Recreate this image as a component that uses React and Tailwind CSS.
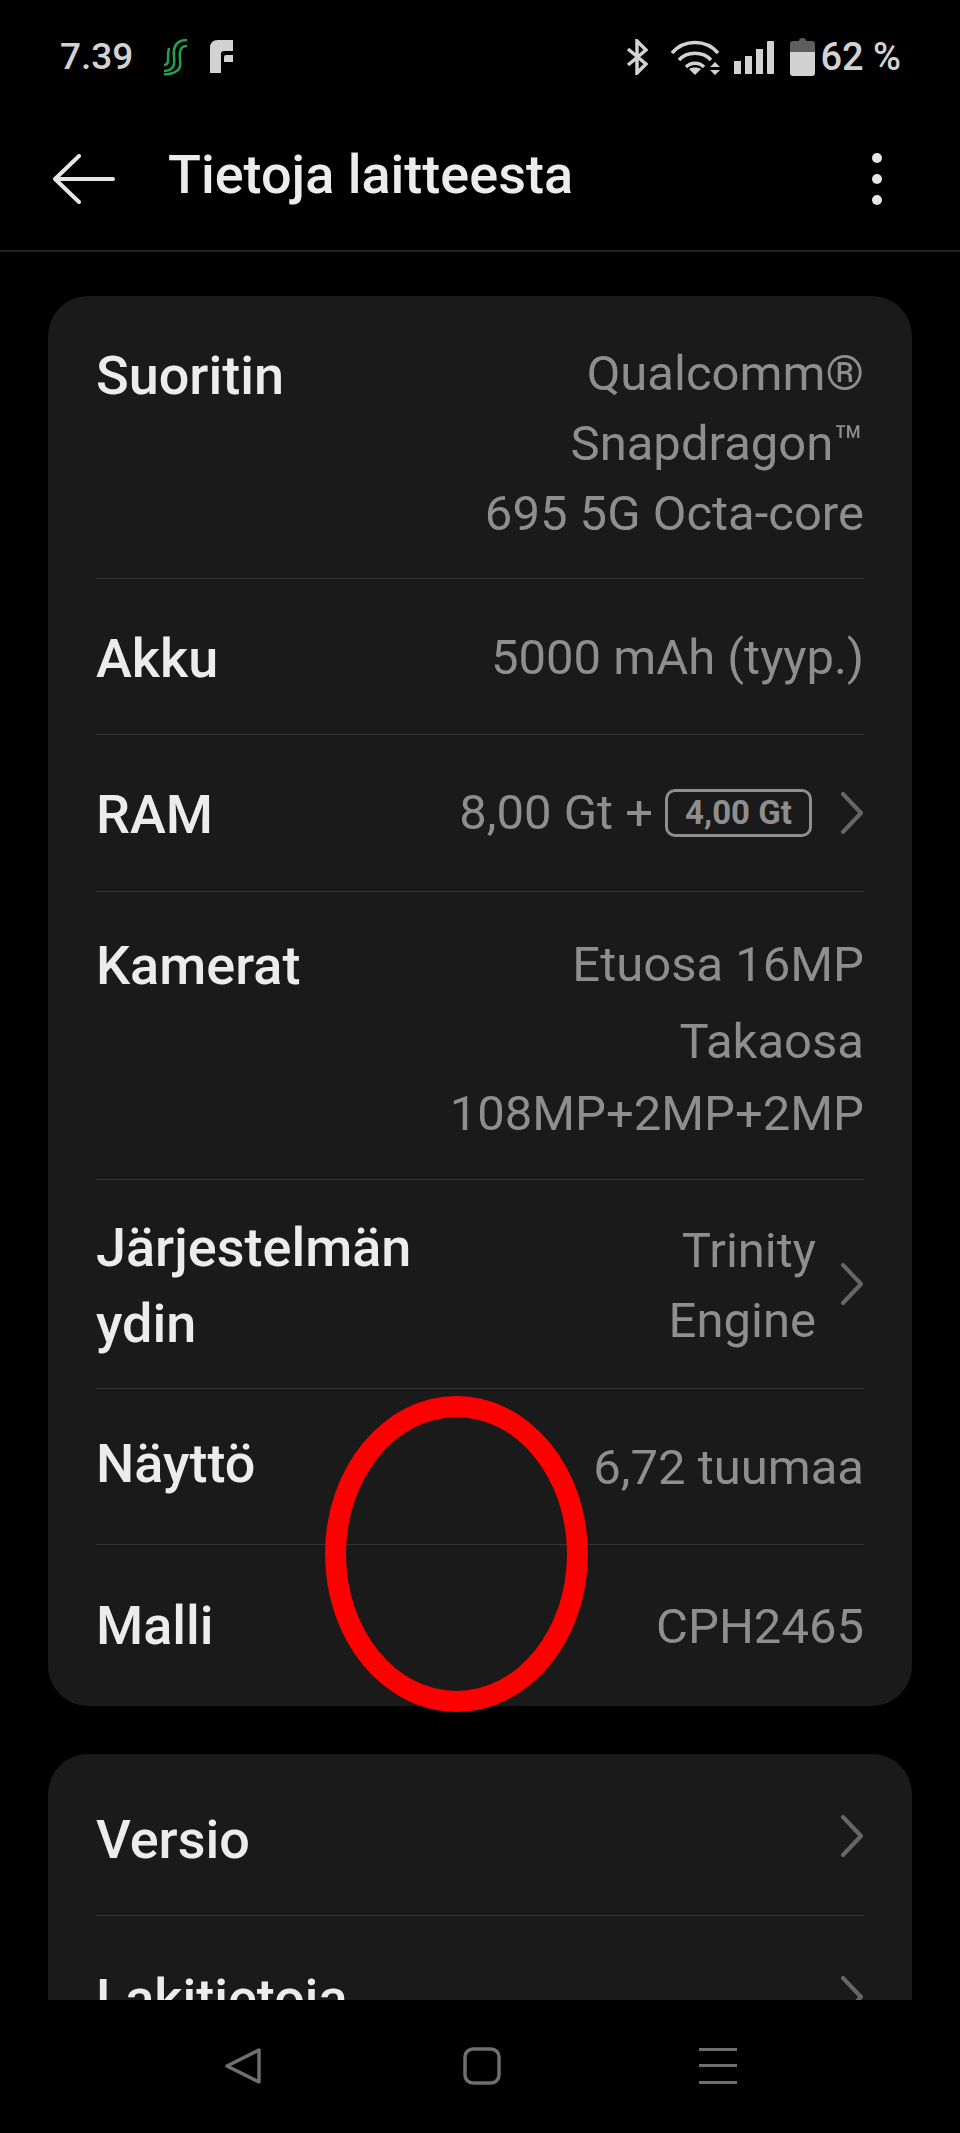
import React from 'react';

const font = { fontFamily: 'Roboto, sans-serif' };

const Chevron = ({ className = '' }) => (
    <svg className={`w-[24px] h-[42px] shrink-0 ${className}`} viewBox="0 0 24 42" fill="none" stroke="#666666" strokeWidth="4" strokeLinecap="round" strokeLinejoin="round">
        <path d="M3 2 L21 21 L3 40" />
    </svg>
);

const Label = ({ children }) => (
    <div className="pt-[4px] text-[#ececec] text-[54px] leading-[76px] font-medium">{children}</div>
);

const Value = ({ lines }) => (
    <div className="pt-[3px] text-[#8e8e8e] text-[49px] leading-[70px] text-right">
        {lines.map((line) => <div key={line}>{line}</div>)}
    </div>
);

const StatusBar = () => (
    <div className="h-[110px] flex items-center justify-between pl-[60px] pr-[59px] pt-[4px] text-[#d2d2d2] text-[38px]">
        <div className="flex items-center">
            <span className="text-[37px] font-medium">7.39</span>
            <svg className="ml-[29px] w-[26px] h-[38px]" viewBox="0 0 26 38" fill="none" stroke="#23a04f" strokeWidth="2.5">
                <path d="M25 2 C16 2 13 6 12 12 C11 18 13 20 12 26 C11 31 6 33 2 33" />
                <path d="M25 8 C20 8 19 10 18 14 C17 20 19 22 18 28 C17 34 8 37 2 36" />
                <path d="M2 27 C5 27 6 25 6 22 C6 17 6 14 7 10" />
            </svg>
            <svg className="ml-[22px] w-[24px] h-[34px]" viewBox="0 0 24 34" fill="#d2d2d2">
                <path d="M0 8 Q0 0 8 0 H23 V11 H14 Q11 11 11 14 V33 H0 Z" />
                <path d="M14 22 V17 Q14 15 16 15 H23 V22 Z" />
            </svg>
        </div>
        <div className="flex items-center">
            <svg className="w-[22px] h-[36px]" viewBox="0 0 22 36" fill="none" stroke="#d2d2d2" strokeWidth="3.5">
                <path d="M2 10 L20 25 L11 34 V2 L20 11 L2 26" />
            </svg>
            <svg className="ml-[22px] w-[52px] h-[36px]" viewBox="0 0 52 36" fill="none" stroke="#d2d2d2" strokeWidth="3.5">
                <path d="M2 14 C14 0 36 0 48 14" />
                <path d="M9 21 C17 12 33 12 41 21" />
                <path d="M16 28 C21 23 29 23 34 28" />
                <path d="M25 36 L19 30 C22 28 28 28 31 30 Z" fill="#d2d2d2" stroke="none" />
                <path d="M45 23 L50 28 H40 Z M40 31 H50 L45 36 Z" fill="#d2d2d2" stroke="none" />
            </svg>
            <svg className="ml-[12px] w-[41px] h-[33px]" viewBox="0 0 41 33" fill="#d2d2d2">
                <rect x="0" y="20" width="7" height="13" />
                <rect x="11" y="15" width="7" height="18" />
                <rect x="22" y="8" width="7" height="25" />
                <rect x="33" y="0" width="7" height="33" rx="1" />
            </svg>
            <svg className="ml-[15px] w-[25px] h-[38px]" viewBox="0 0 25 38" fill="#d2d2d2">
                <path d="M0 14 V6 Q0 3 3 3 H9 Q9 0 12.5 0 Q16 0 16 3 H22 Q25 3 25 6 V14 Z" fill="#5e5e5e" />
                <path d="M0 14 H25 V35 Q25 38 22 38 H3 Q0 38 0 35 Z" />
            </svg>
            <span className="ml-[5px] font-medium">62 %</span>
        </div>
    </div>
);

const Header = () => (
    <div className="h-[142px] flex items-center pl-[53px] pr-[78px] border-b-2 border-[#222222] text-[#ececec]">
        <svg className="w-[62px] h-[50px] shrink-0 -mt-[2px]" viewBox="0 0 62 50" fill="none" stroke="#e6e6e6" strokeWidth="4" strokeLinecap="round" strokeLinejoin="round">
            <path d="M60 25 H2 M26 2 L2 25 L26 48" />
        </svg>
        <div className="ml-[53px] -mt-[10px] flex-1 text-[54px] font-medium leading-none">Tietoja laitteesta</div>
        <div className="flex flex-col gap-[11px] -mt-[2px]">
            <div className="w-[10px] h-[10px] rounded-full bg-[#e6e6e6]" />
            <div className="w-[10px] h-[10px] rounded-full bg-[#e6e6e6]" />
            <div className="w-[10px] h-[10px] rounded-full bg-[#e6e6e6]" />
        </div>
    </div>
);

export default function App() {
    return (
        <div className="relative w-[960px] h-[2133px] bg-black overflow-hidden" style={font}>
            <StatusBar />
            <Header />

            <div className="h-[1748px] overflow-hidden px-[48px] pt-[44px]">
                <div className="bg-[#1a1a1a] rounded-[40px] px-[48px] h-[1410px] flex flex-col">
                    <div className="h-[283px] flex justify-between items-start pt-[40px] border-b border-[#333333]">
                        <div className="-mt-[2px]"><Label>Suoritin</Label></div>
                        <Value lines={['Qualcomm®', 'Snapdragon™', '695 5G Octa-core']} />
                    </div>
                    <div className="h-[156px] flex justify-between items-center border-b border-[#333333]">
                        <Label>Akku</Label>
                        <Value lines={['5000 mAh (tyyp.)']} />
                    </div>
                    <div className="h-[157px] flex justify-between items-center border-b border-[#333333]">
                        <Label>RAM</Label>
                        <div className="flex items-center text-[#8e8e8e] text-[49px]">
                            <span>8,00 Gt +</span>
                            <span className="ml-[12px] w-[147px] h-[48px] flex items-center justify-center rounded-[10px] border-[3px] border-[#8e8e8e] text-[33px] font-bold">4,00 Gt</span>
                            <Chevron className="ml-[28px]" />
                        </div>
                    </div>
                    <div className="h-[288px] flex justify-between items-start pt-[37px] border-b border-[#333333]">
                        <div className="-mt-[5px]"><Label>Kamerat</Label></div>
                        <div className="text-[#8e8e8e] text-[49px] leading-[72px] text-right">
                            <div className="mb-[5px]">Etuosa 16MP</div>
                            <div>Takaosa</div>
                            <div>108MP+2MP+2MP</div>
                        </div>
                    </div>
                    <div className="h-[209px] flex justify-between items-center border-b border-[#333333]">
                        <Label>Järjestelmän<br />ydin</Label>
                        <div className="flex items-center">
                            <Value lines={['Trinity', 'Engine']} />
                            <Chevron className="ml-[24px]" />
                        </div>
                    </div>
                    <div className="h-[156px] flex justify-between items-center border-b border-[#333333]">
                        <div className="-mt-[10px]"><Label>Näyttö</Label></div>
                        <Value lines={['6,72 tuumaa']} />
                    </div>
                    <div className="flex-1 flex justify-between items-center">
                        <div className="-mt-[4px]"><Label>Malli</Label></div>
                        <Value lines={['CPH2465']} />
                    </div>
                </div>

                <div className="mt-[48px] bg-[#1a1a1a] rounded-[40px] px-[48px] h-[400px]">
                    <div className="h-[162px] flex justify-between items-center border-b border-[#333333]">
                        <div className="mt-[6px]"><Label>Versio</Label></div>
                        <Chevron className="mt-[3px]" />
                    </div>
                    <div className="h-[162px] flex justify-between items-center">
                        <Label>Lakitietoja</Label>
                        <Chevron />
                    </div>
                </div>
            </div>

            <div className="h-[133px] flex items-start pt-[47px] pl-[224px]">
                <svg className="w-[38px] h-[38px]" viewBox="0 0 38 38" fill="none" stroke="#6f6f6f" strokeWidth="3.5" strokeLinejoin="round">
                    <path d="M35 3 V35 L3 19 Z" />
                </svg>
                <svg className="ml-[201px] w-[38px] h-[38px]" viewBox="0 0 38 38" fill="none" stroke="#6f6f6f" strokeWidth="3.5">
                    <rect x="2" y="2" width="34" height="34" rx="8" />
                </svg>
                <svg className="ml-[198px] w-[38px] h-[38px]" viewBox="0 0 38 38" fill="#6f6f6f">
                    <rect x="0" y="1" width="38" height="3" />
                    <rect x="0" y="17" width="38" height="3" />
                    <rect x="0" y="34" width="38" height="3" />
                </svg>
            </div>

            {/* red marking drawn over the screenshot */}
            <div className="absolute left-[325px] top-[1396px] w-[263px] h-[316px] rounded-[50%] border-[21px] border-[#ff0000]" />
        </div>
    );
}
